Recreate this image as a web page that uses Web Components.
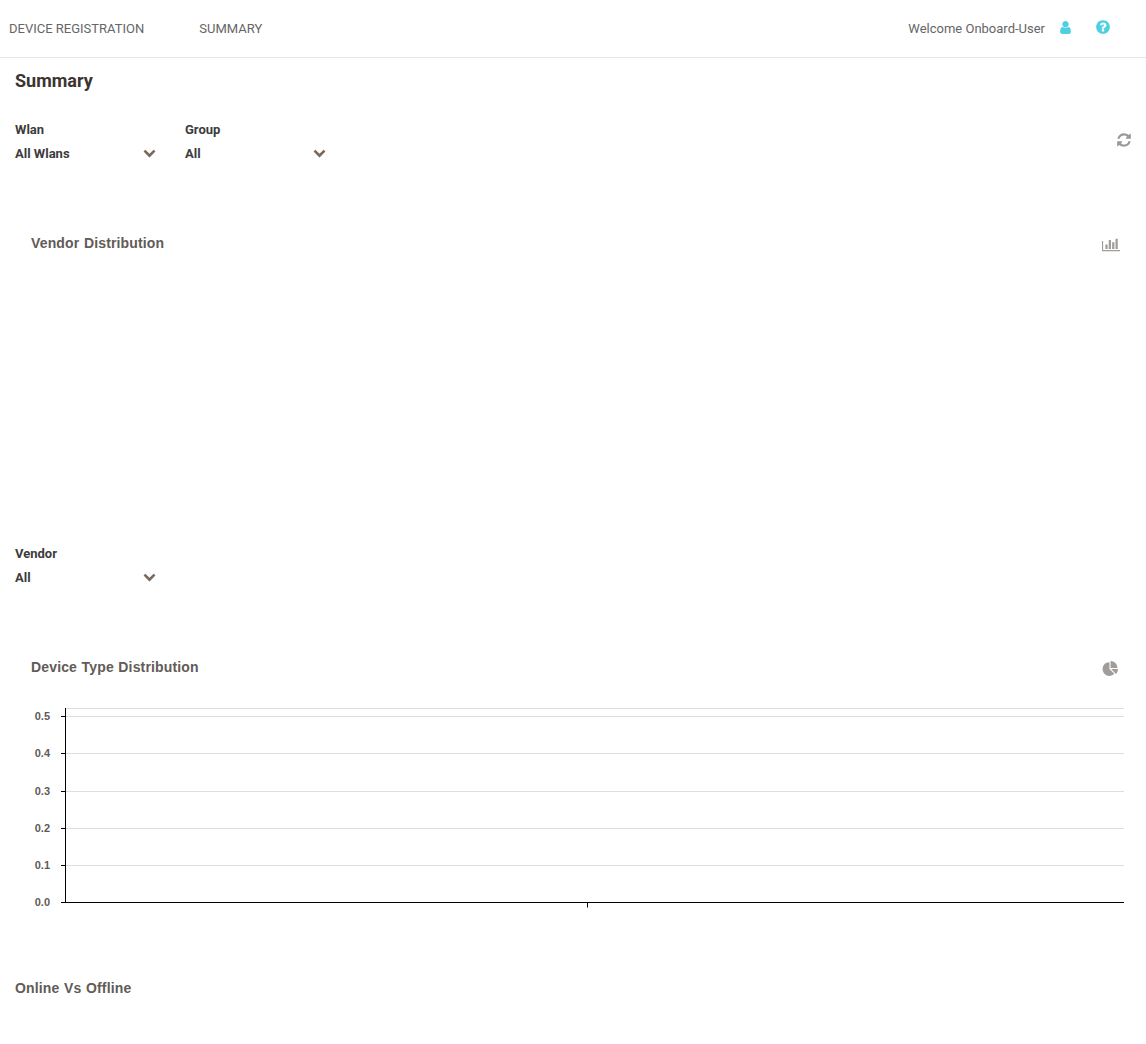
<!DOCTYPE html>
<html lang="en">
<head>
<meta charset="utf-8">
<title>Summary</title>
<style>
    body { margin: 0; background: #fff; font-family: Roboto, "Liberation Sans", sans-serif; color: #3c3c3c; }
</style>
</head>
<body>
<app-nav user="Onboard-User">
    <nav-link>DEVICE REGISTRATION</nav-link>
    <nav-link>SUMMARY</nav-link>
</app-nav>
<summary-page>
    <filter-row slot="top">
        <filter-select label="Wlan" value="All Wlans"></filter-select>
        <filter-select label="Group" value="All"></filter-select>
        <fa-icon slot="end" name="refresh" size="16" color="#999"></fa-icon>
    </filter-row>
    <chart-panel titulo="Vendor Distribution" icon="bar" height="292"></chart-panel>
    <filter-row>
        <filter-select label="Vendor" value="All"></filter-select>
    </filter-row>
    <chart-panel titulo="Device Type Distribution" icon="pie" height="250">
        <axis-chart></axis-chart>
    </chart-panel>
    <section-title>Online Vs Offline</section-title>
</summary-page>

<script>
const ICONOS = {
    user: ["0 0 1792 1792", "M1536 1399q0 109-62.5 187t-150.5 78h-854q-88 0-150.5-78t-62.5-187q0-85 8.5-160.5t31.5-152 58.5-131 94-89 134.5-34.5q131 128 313 128t313-128q76 0 134.5 34.5t94 89 58.5 131 31.5 152 8.5 160.5zm-256-887q0 159-112.5 271.5t-271.5 112.5-271.5-112.5-112.5-271.5 112.5-271.5 271.5-112.5 271.5 112.5 112.5 271.5z"],
    question: ["0 0 1792 1792", "M1024 1376v-192q0-14-9-23t-23-9h-192q-14 0-23 9t-9 23v192q0 14 9 23t23 9h192q14 0 23-9t9-23zm256-672q0-88-55.5-163t-138.5-116-170-41q-243 0-371 213-15 24 8 42l132 100q7 6 19 6 16 0 25-12 53-68 86-92 34-24 86-24 48 0 85.5 26t37.5 59q0 38-20 61t-68 45q-63 28-115.5 86.5t-52.5 125.5v36q0 14 9 23t23 9h192q14 0 23-9t9-23q0-19 21.5-49.5t54.5-49.5q32-18 49-28.5t46-35 44.5-48 28-60.5 12.5-81zm384 192q0 209-103 385.5t-279.5 279.5-385.5 103-385.5-103-279.5-279.5-103-385.5 103-385.5 279.5-279.5 385.5-103 385.5 103 279.5 279.5 103 385.5z"],
    refresh: ["0 0 1792 1792", "M1639 1056q0 5-1 7-64 268-268 434.5t-478 166.5q-146 0-282.5-55t-243.5-157l-129 129q-19 19-45 19t-45-19-19-45v-448q0-26 19-45t45-19h448q26 0 45 19t19 45-19 45l-137 137q71 66 161 102t187 36q134 0 250-65t186-179q11-17 53-117 8-23 30-23h192q13 0 22.5 9.5t9.5 22.5zm25-800v448q0 26-19 45t-45 19h-448q-26 0-45-19t-19-45 19-45l138-138q-148-137-349-137-134 0-250 65t-186 179q-11 17-53 117-8 23-30 23h-199q-13 0-22.5-9.5t-9.5-22.5v-7q65-268 270-434.5t480-166.5q146 0 284 55.5t245 156.5l130-129q19-19 45-19t45 19 19 45z"],
    bar: ["0 128 2048 1664", "M640 896v512h-256v-512h256zm384-512v1024h-256v-1024h256zm1024 1152v128h-2048v-1152h128v1024h1920zm-640-896v768h-256v-768h256zm384-384v1152h-256v-1152h256z"],
    pie: ["0 0 1792 1792", "M832 894l546 546q-106 108-247.5 168t-298.5 60q-209 0-385.5-103t-279.5-279.5-103-385.5 103-385.5 279.5-279.5 385.5-103v762zm187 4h773q0 157-60 298.5t-168 247.5zm709-128h-768v-768q209 0 385.5 103t279.5 279.5 103 385.5z"],
    chevron: ["0 0 1792 1792", "M1683 808l-742 741q-19 19-45 19t-45-19l-742-741q-19-19-19-45.5t19-45.5l166-165q19-19 45-19t45 19l531 531 531-531q19-19 45-19t45 19l166 165q19 19 19 45.5t-19 45.5z"]
};

class FaIcon extends HTMLElement {
    constructor() {
        super();
        this.attachShadow({ mode: "open" });
    }

    connectedCallback() {
        let icono = ICONOS[this.getAttribute("name")];
        let size  = this.getAttribute("size") || "16";
        let color = this.getAttribute("color") || "currentColor";

        this.shadowRoot.innerHTML = `
            <style>
                :host { display: inline-flex; line-height: 0; }
            </style>
            <svg width="${size}" height="${size}" viewBox="${icono[0]}" fill="${color}"><path d="${icono[1]}"/></svg>
        `;
    }
}

class NavLink extends HTMLElement {
    constructor() {
        super();
        this.attachShadow({ mode: "open" });
        this.shadowRoot.innerHTML = `
            <style>
                :host { display: block; font-size: 13px; color: #666; }
            </style>
            <slot></slot>
        `;
    }
}

class AppNav extends HTMLElement {
    constructor() {
        super();
        this.attachShadow({ mode: "open" });
    }

    connectedCallback() {
        let user = this.getAttribute("user") || "";

        this.shadowRoot.innerHTML = `
            <style>
                :host { display: flex; align-items: center; justify-content: space-between; height: 57px; border-bottom: 1px solid #e6e6e6; padding: 0 35.5px 0 9px; box-sizing: content-box; }
                .links { display: flex; gap: 55px; }
                .derecha { display: flex; align-items: center; font-size: 13px; color: #666; }
                .iconos { display: flex; align-items: center; gap: 22px; margin-left: 12.5px; padding-bottom: 3px; }
            </style>
            <div class="links"><slot></slot></div>
            <div class="derecha">
                <span>Welcome ${user}</span>
                <div class="iconos">
                    <fa-icon name="user" size="15" color="#4dd0e1"></fa-icon>
                    <fa-icon name="question" size="16" color="#4dd0e1"></fa-icon>
                </div>
            </div>
        `;
    }
}

class SummaryPage extends HTMLElement {
    constructor() {
        super();
        this.attachShadow({ mode: "open" });
        this.shadowRoot.innerHTML = `
            <style>
                :host { display: block; padding: 0 15px; }
                h1 { margin: 0; padding-top: 11px; height: 63px; box-sizing: border-box; font-size: 18px; line-height: 23px; font-weight: 700; color: #3b3430; }
            </style>
            <h1>Summary</h1>
            <slot name="top"></slot>
            <slot></slot>
        `;
    }
}

class FilterRow extends HTMLElement {
    constructor() {
        super();
        this.attachShadow({ mode: "open" });
        this.shadowRoot.innerHTML = `
            <style>
                :host { display: flex; align-items: flex-start; height: 54px; }
                .fin { margin-left: auto; padding: 11px 0 0 0; margin-right: -1px; }
            </style>
            <slot></slot>
            <div class="fin"><slot name="end"></slot></div>
        `;
    }
}

class FilterSelect extends HTMLElement {
    constructor() {
        super();
        this.attachShadow({ mode: "open" });
    }

    connectedCallback() {
        let label = this.getAttribute("label") || "";
        let value = this.getAttribute("value") || "";

        this.shadowRoot.innerHTML = `
            <style>
                :host { display: block; width: 170px; font-size: 13px; font-weight: 700; color: #3c3c3c; }
                .label { height: 24px; line-height: 18px; }
                .fila { display: flex; align-items: center; justify-content: space-between; width: 141px; height: 18px; line-height: 18px; }
                fa-icon { margin-bottom: 4px; }
            </style>
            <div class="label">${label}</div>
            <div class="fila">
                <span>${value}</span>
                <fa-icon name="chevron" size="13" color="#7a6a5d"></fa-icon>
            </div>
        `;
    }
}

class ChartPanel extends HTMLElement {
    constructor() {
        super();
        this.attachShadow({ mode: "open" });
    }

    connectedCallback() {
        let titulo = this.getAttribute("titulo") || "";
        let icon   = this.getAttribute("icon");
        let height = this.getAttribute("height") || "250";
        let ancho  = icon == "bar" ? 18 : 16;

        this.shadowRoot.innerHTML = `
            <style>
                :host { display: block; padding-top: 58px; }
                .cabecera { display: flex; align-items: center; justify-content: space-between; padding: 0 0 0 16px; height: 20px; }
                .titulo { font-family: "Liberation Sans", Arial, sans-serif; font-size: 14px; font-weight: 700; letter-spacing: 0.15px; word-spacing: 0.5px; color: #625b57; }
                .accion { width: 29px; padding-top: 8px; }
                .cuerpo { height: ${height}px; }
            </style>
            <div class="cabecera">
                <span class="titulo">${titulo}</span>
                <div class="accion"><fa-icon name="${icon}" size="${ancho}" color="#a09c9a"></fa-icon></div>
            </div>
            <div class="cuerpo"><slot></slot></div>
        `;
    }
}

class AxisChart extends HTMLElement {
    constructor() {
        super();
        this.attachShadow({ mode: "open" });
    }

    connectedCallback() {
        let filas = [["0.5", 716], ["0.4", 753], ["0.3", 791], ["0.2", 828], ["0.1", 865]];
        let y0 = 677;
        let partes = "";

        partes += `<line class="rejilla" x1="50" x2="1109" y1="${708 - y0 + .5}" y2="${708 - y0 + .5}"/>`;
        for (let [texto, y] of filas) {
            let py = y - y0 + .5;
            partes += `<line class="rejilla" x1="50" x2="1109" y1="${py}" y2="${py}"/>`;
            partes += `<line class="eje" x1="46" x2="50" y1="${py}" y2="${py}"/>`;
            partes += `<text x="35" y="${py + 3}">${texto}</text>`;
        }
        let base = 902 - y0 + .5;
        partes += `<line class="eje" x1="50.5" x2="50.5" y1="${708 - y0}" y2="${base}"/>`;
        partes += `<line class="eje" x1="46" x2="1109" y1="${base}" y2="${base}"/>`;
        partes += `<line class="eje" x1="572.5" x2="572.5" y1="${base}" y2="${base + 5}"/>`;
        partes += `<text x="35" y="${base + 3}">0.0</text>`;

        this.shadowRoot.innerHTML = `
            <style>
                :host { display: block; }
                svg { display: block; }
                .rejilla { stroke: #dedede; stroke-width: 1; }
                .eje { stroke: #000; stroke-width: 1; }
                text { font-family: "Liberation Sans", Arial, sans-serif; font-size: 11px; font-weight: 700; fill: #5f5a58; text-anchor: end; }
            </style>
            <svg width="1116" height="250">${partes}</svg>
        `;
    }
}

class SectionTitle extends HTMLElement {
    constructor() {
        super();
        this.attachShadow({ mode: "open" });
        this.shadowRoot.innerHTML = `
            <style>
                :host { display: block; padding-top: 51px; font-family: "Liberation Sans", Arial, sans-serif; font-size: 14px; line-height: 20px; font-weight: 700; letter-spacing: 0.15px; word-spacing: 0.5px; color: #625b57; }
            </style>
            <slot></slot>
        `;
    }
}

customElements.define("fa-icon", FaIcon);
customElements.define("nav-link", NavLink);
customElements.define("app-nav", AppNav);
customElements.define("summary-page", SummaryPage);
customElements.define("filter-row", FilterRow);
customElements.define("filter-select", FilterSelect);
customElements.define("chart-panel", ChartPanel);
customElements.define("axis-chart", AxisChart);
customElements.define("section-title", SectionTitle);
</script>
</body>
</html>
